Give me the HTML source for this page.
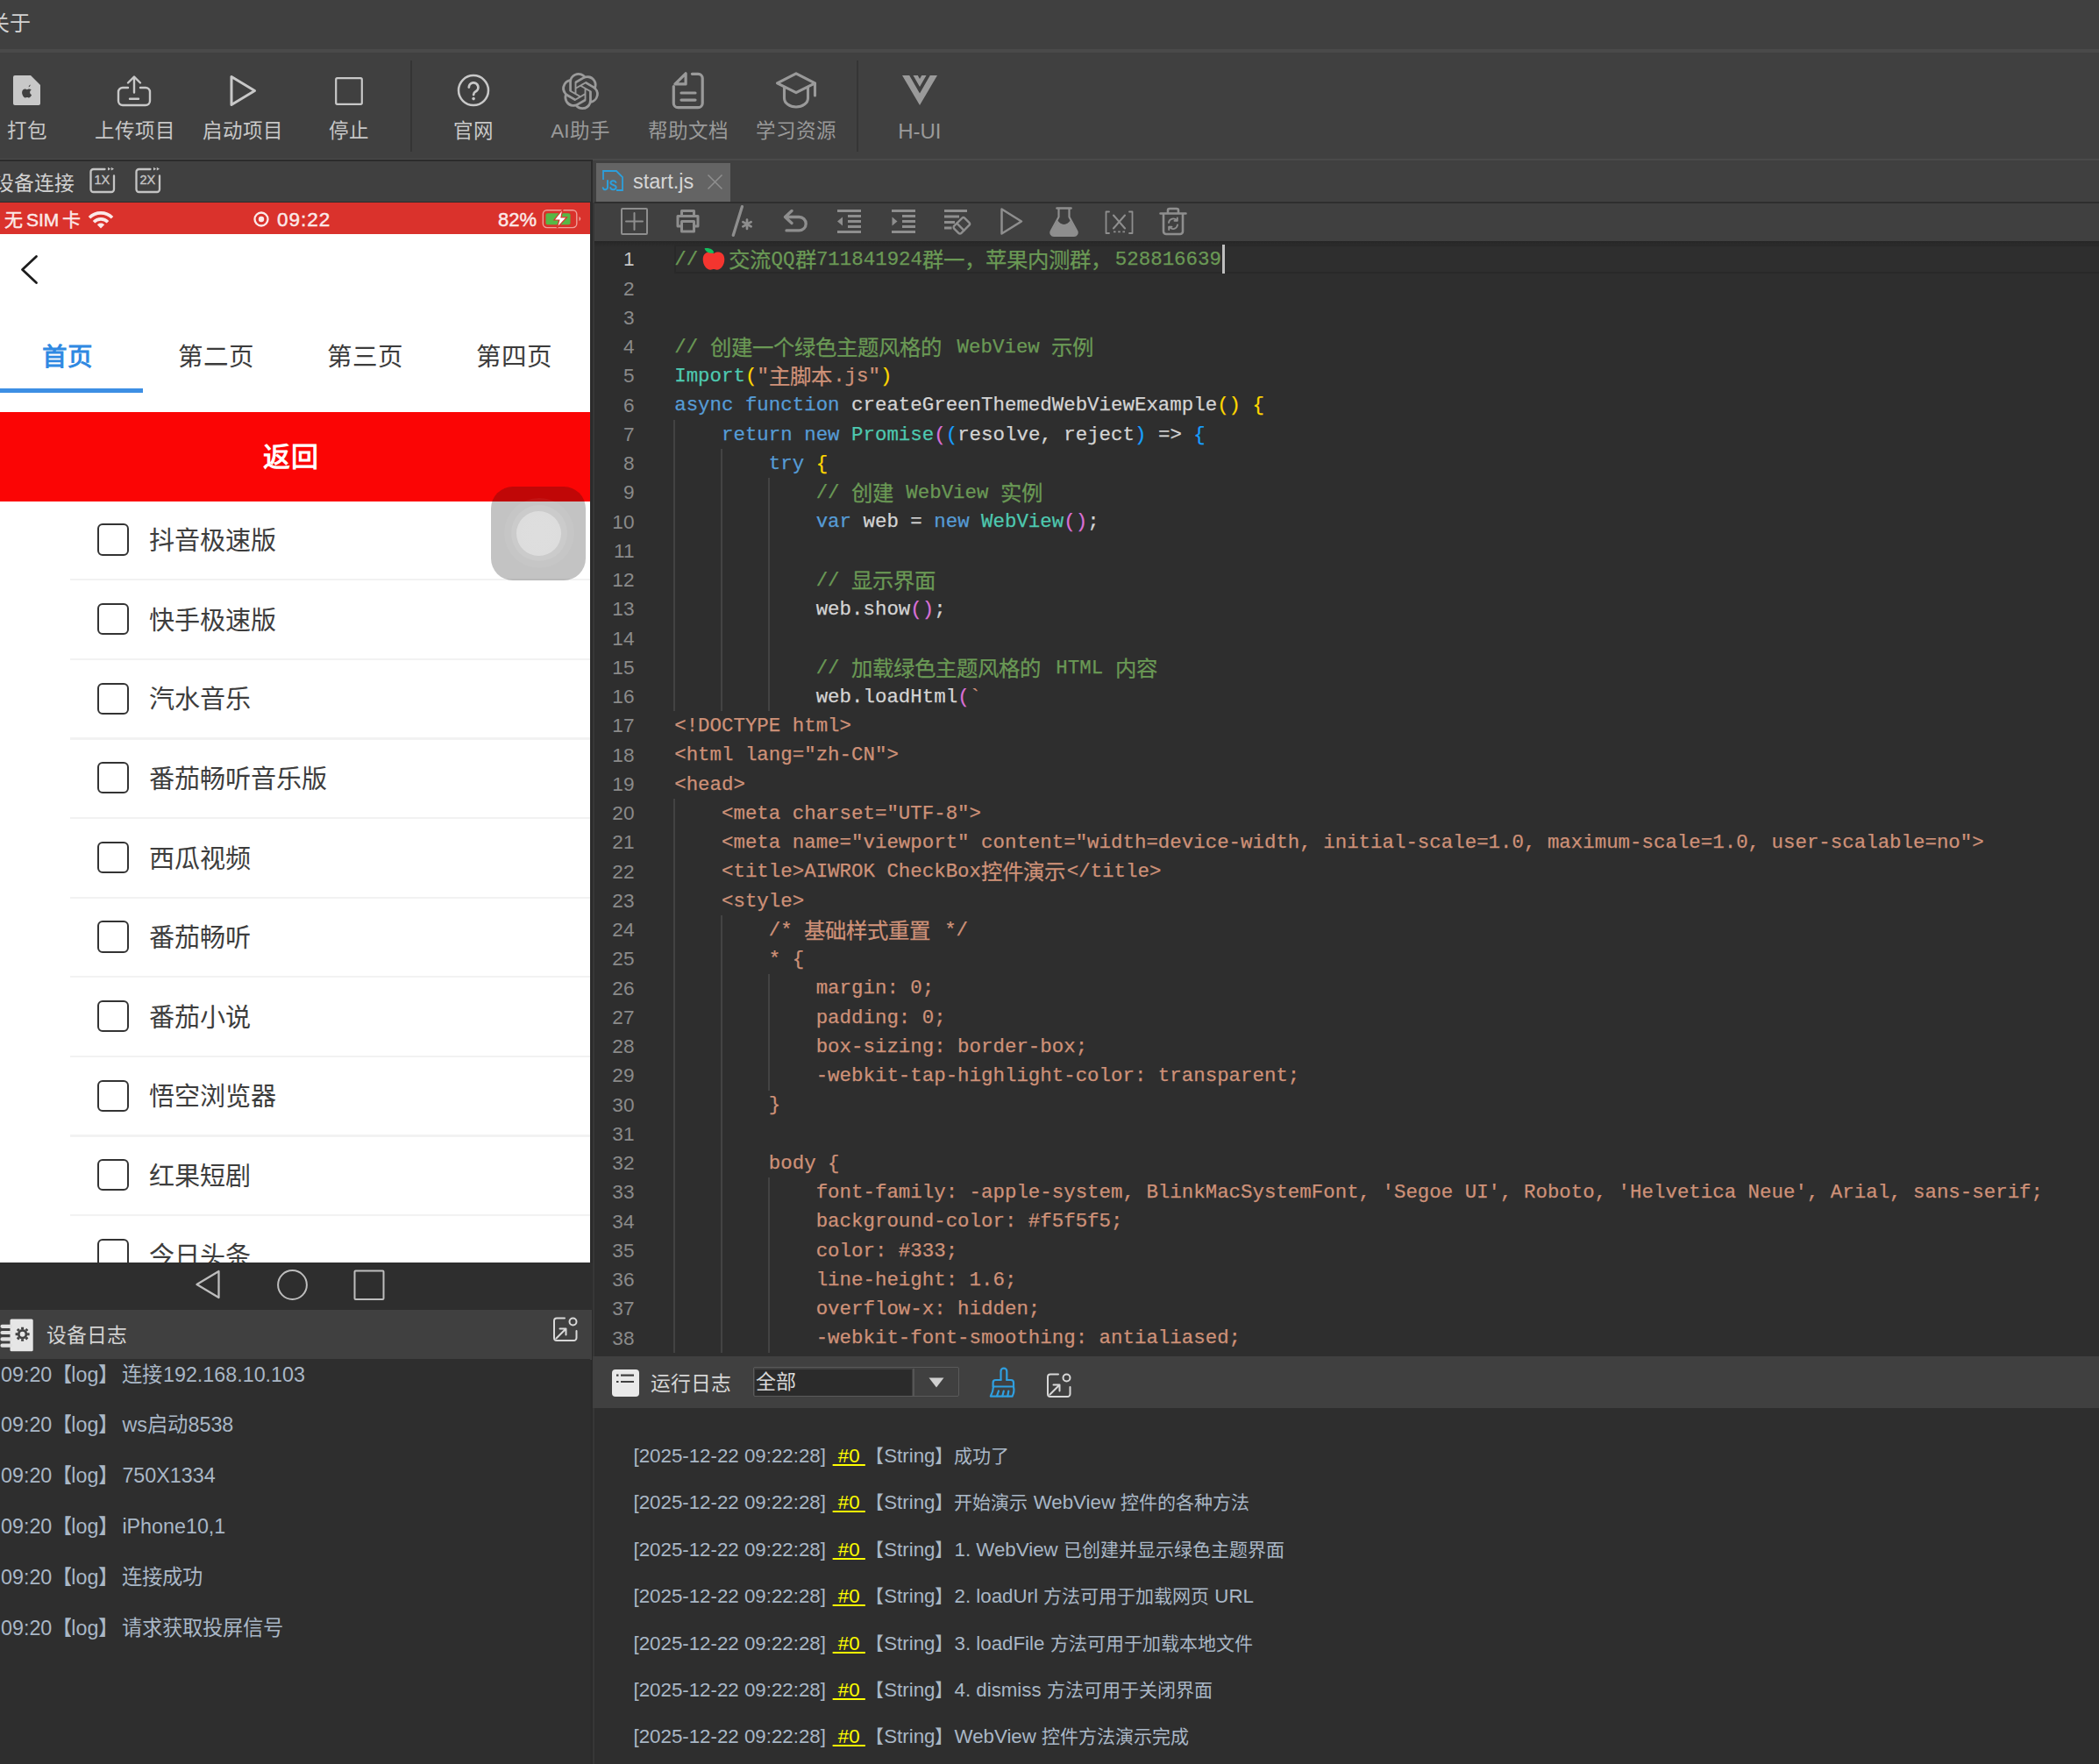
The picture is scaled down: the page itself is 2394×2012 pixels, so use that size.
<!DOCTYPE html>
<html lang="zh-CN"><head><meta charset="utf-8"><title>AIWROK IDE</title><style>
html,body{margin:0;padding:0;}
body{width:2394px;height:2012px;position:relative;overflow:hidden;background:#2e2e2e;font-family:"Liberation Sans", sans-serif;}
body>div,body>svg,.abs{position:absolute;}
.t{white-space:nowrap;font-family:"Liberation Sans", sans-serif;}
.m{white-space:pre;font-family:"Liberation Mono", monospace;-webkit-text-stroke:0.250px currentColor;}
.cj{display:inline-block;overflow:hidden;white-space:nowrap;vertical-align:top;text-align:left;}
svg{overflow:visible;}
</style></head>
<body>
<div style="left:0px;top:0px;width:2394px;height:56px;background:#404040;"></div>
<div class="t" style="left:-13px;top:10.5px;height:31px;line-height:31px;font-size:24px;color:#d2d2d2;">关于</div>
<div style="left:0px;top:56px;width:2394px;height:4px;background:#4a4a4a;"></div>
<div style="left:0px;top:60px;width:2394px;height:121px;background:#404040;"></div>
<div style="left:0px;top:181px;width:2394px;height:1.5px;background:#4a4a4a;"></div>
<div style="left:0px;top:182.5px;width:2394px;height:1.5px;background:#404040;"></div>
<svg style="left:14px;top:85px;" width="33" height="36" viewBox="0 0 33 36"><path d="M3 1 H21 L32 12 V33 a2 2 0 0 1 -2 2 H3 a2 2 0 0 1 -2 -2 V3 a2 2 0 0 1 2 -2 Z" fill="#c8c8c8"/><path d="M18.6 14.2c.1-1.2.9-2.3 2-2.8.1 1.300-.8 2.500-2 2.800zM21.800 17.400c-1.200.7-1.700 1.600-1.700 2.800 0 1.300.8 2.400 2 2.900-.5 1.500-1.700 3.400-3 3.400-.8 0-1.300-.5-2.200-.5s-1.500.5-2.300.5c-1.500 0-3.500-3.100-3.500-5.900 0-2.600 1.700-4 3.400-4 .9 0 1.700.6 2.300.6.600 0 1.500-.7 2.600-.7.900 0 1.800.3 2.400.9z" fill="#404040"/></svg>
<div class="t" style="left:-119.0px;top:135.3px;width:300px;text-align:center;height:29px;line-height:29px;font-size:22.5px;color:#c8c8c8;">打包</div>
<svg style="left:133px;top:85px;" width="40" height="37" viewBox="0 0 40 37"><g fill="none" stroke-linecap="round" stroke-linejoin="round" stroke="#c8c8c8" stroke-width="2.4"><path d="M13 15 H7 a5 5 0 0 0 -5 5 V30 a5 5 0 0 0 5 5 H33 a5 5 0 0 0 5 -5 V20 a5 5 0 0 0 -5 -5 H27"/><path d="M20 20.500 V3 M13 9.500 L20 2.500 L27 9.500 M15 27.800 H25"/></g></svg>
<div class="t" style="left:4.0px;top:135.3px;width:300px;text-align:center;height:29px;line-height:29px;font-size:22.5px;color:#c8c8c8;">上传项目</div>
<svg style="left:261px;top:84px;" width="32" height="39" viewBox="0 0 32 39"><path d="M3 3.500 V35.500 L29.500 19.500 Z" fill="none" stroke-linecap="round" stroke-linejoin="round" stroke="#c8c8c8" stroke-width="3"/></svg>
<div class="t" style="left:126.5px;top:135.3px;width:300px;text-align:center;height:29px;line-height:29px;font-size:22.5px;color:#c8c8c8;">启动项目</div>
<svg style="left:381px;top:87px;" width="34" height="34" viewBox="0 0 34 34"><rect x="2.200" y="2.200" width="29.600" height="29.600" rx="1.500" fill="none" stroke="#c8c8c8" stroke-width="2.200"/></svg>
<div class="t" style="left:248.0px;top:135.3px;width:300px;text-align:center;height:29px;line-height:29px;font-size:22.5px;color:#c8c8c8;">停止</div>
<div style="left:468px;top:69px;width:2px;height:104px;background:#353535;"></div>
<svg style="left:520px;top:84px;" width="40" height="40" viewBox="0 0 40 40"><circle cx="20" cy="19.100" r="17" fill="none" stroke="#c8c8c8" stroke-width="2.500"/><path d="M14.800 15.600 a5.300 5.300 0 1 1 7.600 4.800 c-1.700 1 -2.300 1.800 -2.300 3.600" fill="none" stroke-linecap="round" stroke-linejoin="round" stroke="#c8c8c8" stroke-width="2.800"/><circle cx="20.100" cy="28.600" r="1.800" fill="#c8c8c8"/></svg>
<div class="t" style="left:389.7px;top:135.3px;width:300px;text-align:center;height:29px;line-height:29px;font-size:22.5px;color:#c8c8c8;">官网</div>
<svg style="left:641px;top:82.5px;" width="42" height="42" viewBox="0 0 24 24"><path d="M22.2819 9.8211a5.9847 5.9847 0 0 0-.5157-4.9108 6.0462 6.0462 0 0 0-6.5098-2.9A6.0651 6.0651 0 0 0 4.9807 4.1818a5.9847 5.9847 0 0 0-3.9977 2.9 6.0462 6.0462 0 0 0 .7427 7.0966 5.98 5.98 0 0 0 .511 4.9107 6.051 6.051 0 0 0 6.5146 2.9001A5.9847 5.9847 0 0 0 13.2599 24a6.0557 6.0557 0 0 0 5.7718-4.2058 5.9894 5.9894 0 0 0 3.9977-2.9001 6.0557 6.0557 0 0 0-.7475-7.0729zm-9.022 12.6081a4.4755 4.4755 0 0 1-2.8764-1.0408l.1419-.0804 4.7783-2.7582a.7948.7948 0 0 0 .3927-.6813v-6.7369l2.02 1.1686a.071.071 0 0 1 .038.052v5.5826a4.504 4.504 0 0 1-4.4945 4.4944zm-9.6607-4.1254a4.4708 4.4708 0 0 1-.5346-3.0137l.142.0852 4.783 2.7582a.7712.7712 0 0 0 .7806 0l5.8428-3.3685v2.3324a.0804.0804 0 0 1-.0332.0615L9.74 19.9502a4.4992 4.4992 0 0 1-6.1408-1.6464zM2.3408 7.8956a4.485 4.485 0 0 1 2.3655-1.9728V11.6a.7664.7664 0 0 0 .3879.6765l5.8144 3.3543-2.0201 1.1685a.0757.0757 0 0 1-.071 0l-4.8303-2.7865A4.504 4.504 0 0 1 2.3408 7.872zm16.5963 3.8558L13.1038 8.364 15.1192 7.2a.0757.0757 0 0 1 .071 0l4.8303 2.7913a4.4944 4.4944 0 0 1-.6765 8.1042v-5.6772a.79.79 0 0 0-.407-.667zm2.0107-3.0231l-.142-.0852-4.7735-2.7818a.7759.7759 0 0 0-.7854 0L9.409 9.2297V6.8974a.0662.0662 0 0 1 .0284-.0615l4.8303-2.7866a4.4992 4.4992 0 0 1 6.6802 4.66zM8.3065 12.863l-2.02-1.1638a.0804.0804 0 0 1-.038-.0567V6.0742a4.4992 4.4992 0 0 1 7.3757-3.4537l-.142.0805L8.704 5.459a.7948.7948 0 0 0-.3927.6813zm1.0976-2.3654l2.602-1.4998 2.6069 1.4998v2.9994l-2.5974 1.4997-2.6067-1.4997Z" fill="#9a9a9a"/></svg>
<div class="t" style="left:512.0px;top:135.3px;width:300px;text-align:center;height:29px;line-height:29px;font-size:22.5px;color:#9a9a9a;">AI助手</div>
<svg style="left:765px;top:81px;" width="40" height="45" viewBox="0 0 40 45"><g fill="none" stroke-linecap="round" stroke-linejoin="round" stroke="#9a9a9a" stroke-width="3.200"><path d="M24.400 3.300 H31.200 a5 5 0 0 1 5 5 V36.700 a5 5 0 0 1 -5 5 H8.300 a5 5 0 0 1 -5 -5 V17.500"/><path d="M4.900 14.900 L17.100 2.800 V14.900 Z"/><path d="M12 25 H28 M12 33.100 H28"/></g></svg>
<div class="t" style="left:635.0px;top:135.3px;width:300px;text-align:center;height:29px;line-height:29px;font-size:22.5px;color:#9a9a9a;">帮助文档</div>
<svg style="left:884px;top:82px;" width="48" height="44" viewBox="0 0 48 44"><g fill="none" stroke-linecap="round" stroke-linejoin="round" stroke="#9a9a9a" stroke-width="3.100"><path d="M24 1.900 L45.500 12.800 L24 23.700 L2.500 12.800 Z M10.500 17.500 V30 c0 5.500 6 10 13.500 10 s13.500 -4.500 13.500 -10 V17.500 M45.500 12.800 V27"/></g></svg>
<div class="t" style="left:757.6px;top:135.3px;width:300px;text-align:center;height:29px;line-height:29px;font-size:22.5px;color:#9a9a9a;">学习资源</div>
<div style="left:977px;top:69px;width:2px;height:104px;background:#353535;"></div>
<svg style="left:1028px;top:85px;" width="42" height="36" viewBox="0 0 42 36"><path d="M1 1 H9.200 L21 21.500 L32.800 1 H41 L21 35 Z" fill="#9a9a9a"/><path d="M13.500 1 H18.800 L21 5 L23.200 1 H28.500 L21 14 Z" fill="#9a9a9a"/></svg>
<div class="t" style="left:898.8px;top:134.0px;width:300px;text-align:center;height:31px;line-height:31px;font-size:24px;color:#9a9a9a;">H-UI</div>
<div style="left:0px;top:184px;width:674px;height:46px;background:#404040;"></div>
<div style="left:0px;top:182.4px;width:676px;height:1.8px;background:#2b2b2b;"></div>
<div style="left:673px;top:231px;width:1.2px;height:1781px;background:#2d2d2d;"></div>
<div style="left:674.2px;top:184px;width:1.8px;height:1828px;background:#2b2b2b;"></div>
<div style="left:676px;top:184px;width:2px;height:47px;background:#404040;"></div>
<div style="left:676px;top:231px;width:2px;height:1781px;background:#373737;"></div>
<div style="left:0px;top:229.5px;width:676px;height:1.8px;background:#2b2b2b;"></div>
<div class="t" style="left:-6.6px;top:193.7px;height:30px;line-height:30px;font-size:22.8px;color:#d2d2d2;">设备连接</div>
<svg style="left:101px;top:190px;" width="32" height="32" viewBox="0 0 32 32"><path d="M18.500 3 H5.500 a3 3 0 0 0 -3 3 V26 a3 3 0 0 0 3 3 H26 a3 3 0 0 0 3 -3 V10.500" fill="none" stroke-linecap="round" stroke-linejoin="round" stroke="#c4c4c4" stroke-width="2.300"/><path d="M22 0.800 L25.200 2.700 L22 4.600 Z M25.800 0.800 L29 2.700 L25.800 4.600 Z" fill="#c4c4c4"/><text x="15.300" y="20.300" text-anchor="middle" font-family="Liberation Sans, sans-serif" font-size="14.500" fill="#c4c4c4" stroke="#c4c4c4" stroke-width="0.400">1X</text></svg>
<svg style="left:153px;top:190px;" width="32" height="32" viewBox="0 0 32 32"><path d="M18.500 3 H5.500 a3 3 0 0 0 -3 3 V26 a3 3 0 0 0 3 3 H26 a3 3 0 0 0 3 -3 V10.500" fill="none" stroke-linecap="round" stroke-linejoin="round" stroke="#c4c4c4" stroke-width="2.300"/><path d="M22 0.800 L25.200 2.700 L22 4.600 Z M25.800 0.800 L29 2.700 L25.800 4.600 Z" fill="#c4c4c4"/><text x="15.300" y="20.300" text-anchor="middle" font-family="Liberation Sans, sans-serif" font-size="14.500" fill="#c4c4c4" stroke="#c4c4c4" stroke-width="0.400">2X</text></svg>
<div style="left:678px;top:184px;width:1716px;height:46px;background:#404040;"></div>
<div style="left:679.7px;top:186px;width:153.3px;height:43.7px;background:#646464;"></div>
<svg style="left:686px;top:193px;" width="26" height="26" viewBox="0 0 26 26"><path d="M2 12 V2 H17 L24 9 V24 H17" fill="none" stroke="#2d9fdb" stroke-width="1.800"/><g fill="none" stroke="#2d9fdb" stroke-width="2" stroke-linecap="round"><path d="M7 13 V20.400 a2.700 2.700 0 0 1 -5.300 0.800"/><path d="M16.400 15 a3.100 2.500 0 0 0 -6 0.300 c0 3.500 6.300 1.900 6.300 5.500 a3.300 2.700 0 0 1 -6.500 0.200"/></g></svg>
<div class="t" style="left:722px;top:192.0px;height:31px;line-height:31px;font-size:23.5px;color:#d6d6d6;">start.js</div>
<svg style="left:806px;top:198px;" width="19" height="19" viewBox="0 0 19 19"><path d="M1.500 1.500 L17.500 17.500 M17.500 1.500 L1.500 17.500" stroke="#8e8e8e" stroke-width="1.600" fill="none"/></svg>
<div style="left:678px;top:229.7px;width:1716px;height:1.8px;background:#2f2f2f;"></div>
<div style="left:678px;top:231.5px;width:1716px;height:43.5px;background:#404040;"></div>
<svg style="left:707px;top:236px;" width="33" height="33" viewBox="0 0 33 33"><g fill="none" stroke-linecap="round" stroke-linejoin="round" stroke="#8e8e8e" stroke-width="2"><rect x="2" y="2" width="29" height="29" rx="1"/><path d="M7 16.500 H26 M16.500 7 V26"/></g></svg>
<svg style="left:770px;top:238px;" width="29" height="28" viewBox="0 0 29 28"><g fill="none" stroke-linecap="round" stroke-linejoin="round" stroke="#8e8e8e" stroke-width="3" stroke-linecap="butt" stroke-linejoin="miter"><path d="M7.500 8.500 V2.500 H21.500 V8.500"/><path d="M7.500 20 H3 V8.500 H26 V20 H21.500"/><rect x="7.500" y="14.500" width="14" height="11.500"/></g></svg>
<svg style="left:832px;top:233px;" width="32" height="38" viewBox="0 0 32 38"><path d="M14.400 2.700 L4.300 35.300" stroke="#8e8e8e" stroke-width="3.300" stroke-linecap="round" fill="none"/><g stroke="#8e8e8e" stroke-width="2.700" stroke-linecap="round"><path d="M20 17.500 V28 M15.400 20.100 L24.600 25.400 M24.600 20.100 L15.400 25.400"/></g></svg>
<svg style="left:892px;top:237px;" width="32" height="30" viewBox="0 0 32 30"><g fill="none" stroke-linecap="round" stroke-linejoin="round" stroke="#8e8e8e" stroke-width="3.300"><path d="M11 3.500 L3.500 10.500 L11 17.500"/><path d="M4.500 10.500 H19.500 a7.700 7.700 0 0 1 0 15.400 H5"/></g></svg>
<svg style="left:955px;top:239px;" width="27" height="27" viewBox="0 0 27 27"><g stroke="#8e8e8e" stroke-width="2.900" fill="none"><path d="M0 1.500 H27 M12 7.500 H27 M12 13.500 H27 M12 19.500 H27 M0 25.500 H27"/></g><path d="M0 13.500 L6 8.500 V18.500 Z" fill="#8e8e8e"/></svg>
<svg style="left:1016.5px;top:239px;" width="27" height="27" viewBox="0 0 27 27"><g stroke="#8e8e8e" stroke-width="2.900" fill="none"><path d="M0 1.500 H27 M12 7.500 H27 M12 13.500 H27 M12 19.500 H27 M0 25.500 H27"/></g><path d="M6.500 13.500 L0.500 8.500 V18.500 Z" fill="#8e8e8e"/></svg>
<svg style="left:1076px;top:238px;" width="32" height="31" viewBox="0 0 32 31"><g stroke="#8e8e8e" stroke-width="2.900" fill="none"><path d="M1 2.500 H27 M1 9 H18 M1 15.500 H13 M1 22 H9.500"/></g><g transform="rotate(-45 21 19.500)" fill="none" stroke-linecap="round" stroke-linejoin="round" stroke="#8e8e8e" stroke-width="2.400"><rect x="12.500" y="13.500" width="17" height="11.500" rx="2.200"/><path d="M19 13.500 V25"/></g></svg>
<svg style="left:1140px;top:236px;" width="28" height="33" viewBox="0 0 28 33"><path d="M2.500 2.500 V30.500 L25 16.500 Z" fill="none" stroke-linecap="round" stroke-linejoin="round" stroke="#8e8e8e" stroke-width="2.500"/></svg>
<svg style="left:1197px;top:236px;" width="33" height="34" viewBox="0 0 33 34"><path d="M8.500 1.500 H24.500" stroke="#8e8e8e" stroke-width="2.600" stroke-linecap="round"/><path d="M10.500 2 V11.500 L1.800 27.500 a3.600 3.600 0 0 0 3.200 5.300 H28 a3.600 3.600 0 0 0 3.200 -5.300 L22.500 11.500 V2" fill="none" stroke-linecap="round" stroke-linejoin="round" stroke="#8e8e8e" stroke-width="2.200"/><path d="M9.200 15.500 c2.500 3 5 4.500 7.300 4.500 s4.800 -1.500 7.300 -4.500 L31 28 a3 3 0 0 1 -2.800 4.500 H4.800 a3 3 0 0 1 -2.800 -4.500 Z" fill="#8e8e8e"/></svg>
<svg style="left:1260px;top:240px;" width="33" height="28" viewBox="0 0 33 28"><g fill="none" stroke-linecap="round" stroke-linejoin="round" stroke="#8e8e8e" stroke-width="1.800"><path d="M5 1.500 H1.500 V26 H5 M28 1.500 H31.500 V26 H28"/><path d="M10 5.500 L23 20.500 M23 5.500 L10 20.500" stroke-width="2.100"/></g><path d="M10 24.300 h2.600 M15.200 24.300 h2.600 M20.400 24.300 h2.600" stroke="#8e8e8e" stroke-width="1.800" fill="none"/></svg>
<svg style="left:1322px;top:236px;" width="32" height="33" viewBox="0 0 32 33"><g fill="none" stroke-linecap="round" stroke-linejoin="round" stroke="#8e8e8e" stroke-width="2.600"><path d="M1.500 7.500 H30.500 M10 7 V4 a2 2 0 0 1 2 -2 H20 a2 2 0 0 1 2 2 V7 M5 8 V28 a3 3 0 0 0 3 3 H24 a3 3 0 0 0 3 -3 V8"/></g><g fill="none" stroke-linecap="round" stroke-linejoin="round" stroke="#8e8e8e" stroke-width="1.900"><path d="M11 18 a5.200 5.200 0 0 1 9.300 -2.500 M21 20.500 a5.200 5.200 0 0 1 -9.300 2.500"/><path d="M20.800 12.500 V15.800 H17.500 M11.200 26 V22.700 H14.500"/></g></svg>
<div style="left:0px;top:231px;width:673px;height:1209px;background:#ffffff;"></div>
<div style="left:0px;top:231px;width:673px;height:36.3px;background:#da322c;"></div>
<div class="t" style="left:5px;top:236.5px;height:27px;line-height:27px;font-size:21px;color:#fbe9e8;font-weight:normal;-webkit-text-stroke:0.450px #fbe9e8;">无</div>
<div class="t" style="left:30px;top:236.5px;height:27px;line-height:27px;font-size:21px;color:#fbe9e8;font-weight:normal;-webkit-text-stroke:0.450px #fbe9e8;">SIM</div>
<div class="t" style="left:71px;top:236.5px;height:27px;line-height:27px;font-size:21px;color:#fbe9e8;font-weight:normal;-webkit-text-stroke:0.450px #fbe9e8;">卡</div>
<svg style="left:100px;top:239px;" width="30" height="23" viewBox="0 0 30 23"><g fill="none" stroke="#fbe9e8" stroke-width="3.600" stroke-linecap="butt"><path d="M2 9.200 A18.500 18.500 0 0 1 28 9.200"/><path d="M7 14.200 A11.400 11.400 0 0 1 23 14.200"/></g><path d="M15 21.500 L10.800 17.300 A6 6 0 0 1 19.200 17.300 Z" fill="#fbe9e8"/></svg>
<svg style="left:288px;top:240px;" width="20" height="20" viewBox="0 0 20 20"><circle cx="10" cy="10" r="7.500" fill="none" stroke="#fbe9e8" stroke-width="2.300"/><circle cx="10" cy="10" r="3.200" fill="#fbe9e8"/></svg>
<div class="t" style="left:316px;top:235.5px;height:29px;line-height:29px;font-size:22.5px;color:#fbe9e8;font-weight:normal;-webkit-text-stroke:0.450px #fbe9e8;letter-spacing:1px;">09:22</div>
<div class="t" style="left:568px;top:235.5px;height:29px;line-height:29px;font-size:22px;color:#fbe9e8;font-weight:normal;-webkit-text-stroke:0.450px #fbe9e8;">82%</div>
<svg style="left:618px;top:239px;" width="48" height="23" viewBox="0 0 48 23"><rect x="1.300" y="0.800" width="38.500" height="19.800" rx="4.500" fill="none" stroke="#ee9f99" stroke-width="1.400"/><rect x="4.500" y="4.300" width="28" height="13" rx="2" fill="#57b846"/><path d="M42.500 8 a2.800 2.800 0 0 1 0 5.200 Z" fill="#ee9f99"/><path d="M24 -0.500 L14 12 H19.800 L17.200 21 L28.500 8.800 H22 Z" fill="#ffffff" stroke="#da322c" stroke-width="1.200"/></svg>
<svg style="left:20px;top:288px;" width="28" height="40" viewBox="0 0 28 40"><path d="M21.500 4.500 L5.500 19.500 L21.500 34.500" fill="none" stroke="#1d1d1d" stroke-width="2.800" stroke-linecap="round" stroke-linejoin="round"/></svg>
<div class="t" style="left:-73.3px;top:388.5px;width:300px;text-align:center;height:37px;line-height:37px;font-size:28.5px;color:#3089e2;font-weight:bold;">首页</div>
<div class="t" style="left:96.5px;top:388.5px;width:300px;text-align:center;height:37px;line-height:37px;font-size:28.5px;color:#3c3c3c;">第二页</div>
<div class="t" style="left:266.5px;top:388.5px;width:300px;text-align:center;height:37px;line-height:37px;font-size:28.5px;color:#3c3c3c;">第三页</div>
<div class="t" style="left:436.5px;top:388.5px;width:300px;text-align:center;height:37px;line-height:37px;font-size:28.5px;color:#3c3c3c;">第四页</div>
<div style="left:0px;top:442.5px;width:162.5px;height:5px;background:#3d8fe4;"></div>
<div style="left:0px;top:470px;width:673px;height:102px;background:#fb0505;"></div>
<div class="t" style="left:181.7px;top:501.5px;width:300px;text-align:center;height:40px;line-height:40px;font-size:31px;color:#ffffff;font-weight:bold;letter-spacing:1px;">返回</div>
<div style="left:0;top:572px;width:673px;height:868px;overflow:hidden;">
<div class="abs" style="left:111.200px;top:25.4px;width:32.200px;height:32.200px;border:2.600px solid #333;border-radius:6px;background:#fff;"></div>
<div class="abs t" style="left:170px;top:26.2px;height:38px;line-height:38px;font-size:29.100px;color:#3d3d3d;">抖音极速版</div>
<div class="abs" style="left:80px;top:88.2px;width:593px;height:2.200px;background:#f2f2f2;"></div>
<div class="abs" style="left:111.200px;top:116.0px;width:32.200px;height:32.200px;border:2.600px solid #333;border-radius:6px;background:#fff;"></div>
<div class="abs t" style="left:170px;top:116.8px;height:38px;line-height:38px;font-size:29.100px;color:#3d3d3d;">快手极速版</div>
<div class="abs" style="left:80px;top:178.8px;width:593px;height:2.200px;background:#f2f2f2;"></div>
<div class="abs" style="left:111.200px;top:206.6px;width:32.200px;height:32.200px;border:2.600px solid #333;border-radius:6px;background:#fff;"></div>
<div class="abs t" style="left:170px;top:207.4px;height:38px;line-height:38px;font-size:29.100px;color:#3d3d3d;">汽水音乐</div>
<div class="abs" style="left:80px;top:269.4px;width:593px;height:2.200px;background:#f2f2f2;"></div>
<div class="abs" style="left:111.200px;top:297.2px;width:32.200px;height:32.200px;border:2.600px solid #333;border-radius:6px;background:#fff;"></div>
<div class="abs t" style="left:170px;top:298.0px;height:38px;line-height:38px;font-size:29.100px;color:#3d3d3d;">番茄畅听音乐版</div>
<div class="abs" style="left:80px;top:360.0px;width:593px;height:2.200px;background:#f2f2f2;"></div>
<div class="abs" style="left:111.200px;top:387.8px;width:32.200px;height:32.200px;border:2.600px solid #333;border-radius:6px;background:#fff;"></div>
<div class="abs t" style="left:170px;top:388.6px;height:38px;line-height:38px;font-size:29.100px;color:#3d3d3d;">西瓜视频</div>
<div class="abs" style="left:80px;top:450.6px;width:593px;height:2.200px;background:#f2f2f2;"></div>
<div class="abs" style="left:111.200px;top:478.4px;width:32.200px;height:32.200px;border:2.600px solid #333;border-radius:6px;background:#fff;"></div>
<div class="abs t" style="left:170px;top:479.2px;height:38px;line-height:38px;font-size:29.100px;color:#3d3d3d;">番茄畅听</div>
<div class="abs" style="left:80px;top:541.2px;width:593px;height:2.200px;background:#f2f2f2;"></div>
<div class="abs" style="left:111.200px;top:569.0px;width:32.200px;height:32.200px;border:2.600px solid #333;border-radius:6px;background:#fff;"></div>
<div class="abs t" style="left:170px;top:569.8px;height:38px;line-height:38px;font-size:29.100px;color:#3d3d3d;">番茄小说</div>
<div class="abs" style="left:80px;top:631.8px;width:593px;height:2.200px;background:#f2f2f2;"></div>
<div class="abs" style="left:111.200px;top:659.6px;width:32.200px;height:32.200px;border:2.600px solid #333;border-radius:6px;background:#fff;"></div>
<div class="abs t" style="left:170px;top:660.4px;height:38px;line-height:38px;font-size:29.100px;color:#3d3d3d;">悟空浏览器</div>
<div class="abs" style="left:80px;top:722.4px;width:593px;height:2.200px;background:#f2f2f2;"></div>
<div class="abs" style="left:111.200px;top:750.2px;width:32.200px;height:32.200px;border:2.600px solid #333;border-radius:6px;background:#fff;"></div>
<div class="abs t" style="left:170px;top:751.0px;height:38px;line-height:38px;font-size:29.100px;color:#3d3d3d;">红果短剧</div>
<div class="abs" style="left:80px;top:813.0px;width:593px;height:2.200px;background:#f2f2f2;"></div>
<div class="abs" style="left:111.200px;top:840.8px;width:32.200px;height:32.200px;border:2.600px solid #333;border-radius:6px;background:#fff;"></div>
<div class="abs t" style="left:170px;top:841.6px;height:38px;line-height:38px;font-size:29.100px;color:#3d3d3d;">今日头条</div>
<div class="abs" style="left:80px;top:903.6px;width:593px;height:2.200px;background:#f2f2f2;"></div>
</div>
<div style="left:559.800px;top:554.700px;width:108.400px;height:107.500px;border-radius:25px;background:rgba(15,15,15,0.250);"></div>
<div style="left:574.5px;top:568.3px;width:80px;height:80px;border-radius:50%;background:rgba(255,255,255,0.050);"></div>
<div style="left:582.5px;top:576.3px;width:64px;height:64px;border-radius:50%;background:rgba(255,255,255,0.090);"></div>
<div style="left:589.0px;top:582.8px;width:51.0px;height:51.0px;border-radius:50%;background:radial-gradient(circle,rgba(255,255,255,0.370) 0,rgba(255,255,255,0.350) 86%,rgba(255,255,255,0) 100%);"></div>
<div style="left:0px;top:1440.5px;width:676px;height:53.5px;background:#2e2e2e;"></div>
<svg style="left:221px;top:1447px;" width="32" height="36" viewBox="0 0 32 36"><path d="M28.500 3 V33 L3.500 18 Z" fill="none" stroke="#bdbdbd" stroke-width="2.300" stroke-linejoin="round"/></svg>
<svg style="left:315px;top:1447px;" width="37" height="37" viewBox="0 0 37 37"><circle cx="18.500" cy="18.500" r="16.400" fill="none" stroke="#bdbdbd" stroke-width="2"/></svg>
<svg style="left:403px;top:1448px;" width="36" height="36" viewBox="0 0 36 36"><rect x="1.500" y="1.500" width="33" height="32.500" rx="1" fill="none" stroke="#bdbdbd" stroke-width="2"/></svg>
<div style="left:678px;top:275px;width:1716px;height:1272px;background:#2e2e2e;"></div>
<div style="left:678px;top:275px;width:1716px;height:7px;background:linear-gradient(#262626,#2b2b2b 60%,#2e2e2e);"></div>
<div style="left:769.3px;top:279.3px;width:1624.7px;height:2px;background:#292929;"></div>
<div style="left:769.3px;top:309.7px;width:1624.7px;height:2px;background:#292929;"></div>
<div style="left:769.3px;top:279.3px;width:2px;height:32.4px;background:#292929;"></div>
<div style="left:1394px;top:279px;width:3px;height:32.7px;background:#bebebe;"></div>
<div style="left:768px;top:478.9px;width:1.5px;height:332.5px;background:#434343;"></div>
<div style="left:822px;top:512.1px;width:1.5px;height:299.2px;background:#434343;"></div>
<div style="left:876px;top:545.4px;width:1.5px;height:266.0px;background:#434343;"></div>
<div style="left:768px;top:911.1px;width:1.5px;height:631.8px;background:#434343;"></div>
<div style="left:822px;top:1044.2px;width:1.5px;height:498.8px;background:#434343;"></div>
<div style="left:876px;top:1110.7px;width:1.5px;height:133.0px;background:#434343;"></div>
<div style="left:876px;top:1343.4px;width:1.5px;height:199.5px;background:#434343;"></div>
<div style="left:680px;top:277px;width:1714px;height:1270px;overflow:hidden;">
<div class="abs t" style="left:0;top:2.40px;width:43.500px;height:33.25px;line-height:33.25px;text-align:right;font-size:22.600px;color:#c8c8c8;">1</div>
<div class="abs m" style="left:89.2px;top:3.10px;height:33.25px;line-height:33.25px;font-size:22.43px;"><span style="color:#6a9955">//</span><span class="cj" style="width:34.700px;height:33px;position:relative;"><svg class="abs" style="left:4.500px;top:1.800px" width="26" height="28" viewBox="0 0 26 28"><path d="M13 7.200 C9.500 4.200 0.700 4.800 0.700 13.800 C0.700 20.500 5 25.700 9.300 25.700 C11 25.700 12 25 13 25 S15 25.700 16.700 25.700 C21 25.700 25.300 20.500 25.300 13.800 C25.300 4.800 16.500 4.200 13 7.200 Z" fill="#f4352f"/><path d="M13.200 6.500 C13 2.500 8 0.300 2.600 1.200 C3.500 5.500 8.500 7.500 13.200 6.500 Z" fill="#14c05e"/></svg></span><span style="color:#6a9955"><span class="cj" style="width:48.8px;font-family:&quot;Liberation Serif&quot;,serif;font-size:24.42px;">交流</span>QQ<span class="cj" style="width:24.4px;font-family:&quot;Liberation Serif&quot;,serif;font-size:24.42px;">群</span>711841924<span class="cj" style="width:219.8px;font-family:&quot;Liberation Serif&quot;,serif;font-size:24.42px;">群一，苹果内测群，</span>528816639</span></div>
<div class="abs t" style="left:0;top:35.65px;width:43.500px;height:33.25px;line-height:33.25px;text-align:right;font-size:22.600px;color:#8a8a8a;">2</div>
<div class="abs t" style="left:0;top:68.90px;width:43.500px;height:33.25px;line-height:33.25px;text-align:right;font-size:22.600px;color:#8a8a8a;">3</div>
<div class="abs t" style="left:0;top:102.15px;width:43.500px;height:33.25px;line-height:33.25px;text-align:right;font-size:22.600px;color:#8a8a8a;">4</div>
<div class="abs m" style="left:89.2px;top:102.85px;height:33.25px;line-height:33.25px;font-size:22.43px;"><span style="color:#6a9955">// <span class="cj" style="width:268.6px;font-family:&quot;Liberation Serif&quot;,serif;font-size:24.42px;">创建一个绿色主题风格的</span> WebView <span class="cj" style="width:48.8px;font-family:&quot;Liberation Serif&quot;,serif;font-size:24.42px;">示例</span></span></div>
<div class="abs t" style="left:0;top:135.40px;width:43.500px;height:33.25px;line-height:33.25px;text-align:right;font-size:22.600px;color:#8a8a8a;">5</div>
<div class="abs m" style="left:89.2px;top:136.10px;height:33.25px;line-height:33.25px;font-size:22.43px;"><span style="color:#4ec9b0">Import</span><span style="color:#ffd700">(</span><span style="color:#ce9178">"<span class="cj" style="width:73.3px;font-family:&quot;Liberation Serif&quot;,serif;font-size:24.42px;">主脚本</span>.js"</span><span style="color:#ffd700">)</span></div>
<div class="abs t" style="left:0;top:168.65px;width:43.500px;height:33.25px;line-height:33.25px;text-align:right;font-size:22.600px;color:#8a8a8a;">6</div>
<div class="abs m" style="left:89.2px;top:169.35px;height:33.25px;line-height:33.25px;font-size:22.43px;"><span style="color:#569cd6">async function</span><span style="color:#d4d4d4"> createGreenThemedWebViewExample</span><span style="color:#ffd700">() {</span></div>
<div class="abs t" style="left:0;top:201.90px;width:43.500px;height:33.25px;line-height:33.25px;text-align:right;font-size:22.600px;color:#8a8a8a;">7</div>
<div class="abs m" style="left:89.2px;top:202.60px;height:33.25px;line-height:33.25px;font-size:22.43px;"><span style="color:#569cd6">    return new</span><span style="color:#4ec9b0"> Promise</span><span style="color:#da70d6">(</span><span style="color:#179fff">(</span><span style="color:#d4d4d4">resolve, reject</span><span style="color:#179fff">)</span><span style="color:#d4d4d4"> =&gt; </span><span style="color:#179fff">{</span></div>
<div class="abs t" style="left:0;top:235.15px;width:43.500px;height:33.25px;line-height:33.25px;text-align:right;font-size:22.600px;color:#8a8a8a;">8</div>
<div class="abs m" style="left:89.2px;top:235.85px;height:33.25px;line-height:33.25px;font-size:22.43px;"><span style="color:#569cd6">        try</span><span style="color:#ffd700"> {</span></div>
<div class="abs t" style="left:0;top:268.40px;width:43.500px;height:33.25px;line-height:33.25px;text-align:right;font-size:22.600px;color:#8a8a8a;">9</div>
<div class="abs m" style="left:89.2px;top:269.10px;height:33.25px;line-height:33.25px;font-size:22.43px;"><span style="color:#6a9955">            // <span class="cj" style="width:48.8px;font-family:&quot;Liberation Serif&quot;,serif;font-size:24.42px;">创建</span> WebView <span class="cj" style="width:48.8px;font-family:&quot;Liberation Serif&quot;,serif;font-size:24.42px;">实例</span></span></div>
<div class="abs t" style="left:0;top:301.65px;width:43.500px;height:33.25px;line-height:33.25px;text-align:right;font-size:22.600px;color:#8a8a8a;">10</div>
<div class="abs m" style="left:89.2px;top:302.35px;height:33.25px;line-height:33.25px;font-size:22.43px;"><span style="color:#569cd6">            var</span><span style="color:#d4d4d4"> web = </span><span style="color:#569cd6">new</span><span style="color:#4ec9b0"> WebView</span><span style="color:#da70d6">()</span><span style="color:#d4d4d4">;</span></div>
<div class="abs t" style="left:0;top:334.90px;width:43.500px;height:33.25px;line-height:33.25px;text-align:right;font-size:22.600px;color:#8a8a8a;">11</div>
<div class="abs t" style="left:0;top:368.15px;width:43.500px;height:33.25px;line-height:33.25px;text-align:right;font-size:22.600px;color:#8a8a8a;">12</div>
<div class="abs m" style="left:89.2px;top:368.85px;height:33.25px;line-height:33.25px;font-size:22.43px;"><span style="color:#6a9955">            // <span class="cj" style="width:97.7px;font-family:&quot;Liberation Serif&quot;,serif;font-size:24.42px;">显示界面</span></span></div>
<div class="abs t" style="left:0;top:401.40px;width:43.500px;height:33.25px;line-height:33.25px;text-align:right;font-size:22.600px;color:#8a8a8a;">13</div>
<div class="abs m" style="left:89.2px;top:402.10px;height:33.25px;line-height:33.25px;font-size:22.43px;"><span style="color:#d4d4d4">            web.show</span><span style="color:#da70d6">()</span><span style="color:#d4d4d4">;</span></div>
<div class="abs t" style="left:0;top:434.65px;width:43.500px;height:33.25px;line-height:33.25px;text-align:right;font-size:22.600px;color:#8a8a8a;">14</div>
<div class="abs t" style="left:0;top:467.90px;width:43.500px;height:33.25px;line-height:33.25px;text-align:right;font-size:22.600px;color:#8a8a8a;">15</div>
<div class="abs m" style="left:89.2px;top:468.60px;height:33.25px;line-height:33.25px;font-size:22.43px;"><span style="color:#6a9955">            // <span class="cj" style="width:219.8px;font-family:&quot;Liberation Serif&quot;,serif;font-size:24.42px;">加载绿色主题风格的</span> HTML <span class="cj" style="width:48.8px;font-family:&quot;Liberation Serif&quot;,serif;font-size:24.42px;">内容</span></span></div>
<div class="abs t" style="left:0;top:501.15px;width:43.500px;height:33.25px;line-height:33.25px;text-align:right;font-size:22.600px;color:#8a8a8a;">16</div>
<div class="abs m" style="left:89.2px;top:501.85px;height:33.25px;line-height:33.25px;font-size:22.43px;"><span style="color:#d4d4d4">            web.loadHtml</span><span style="color:#da70d6">(</span><span style="color:#ce9178">`</span></div>
<div class="abs t" style="left:0;top:534.40px;width:43.500px;height:33.25px;line-height:33.25px;text-align:right;font-size:22.600px;color:#8a8a8a;">17</div>
<div class="abs m" style="left:89.2px;top:535.10px;height:33.25px;line-height:33.25px;font-size:22.43px;"><span style="color:#ce9178">&lt;!DOCTYPE html&gt;</span></div>
<div class="abs t" style="left:0;top:567.65px;width:43.500px;height:33.25px;line-height:33.25px;text-align:right;font-size:22.600px;color:#8a8a8a;">18</div>
<div class="abs m" style="left:89.2px;top:568.35px;height:33.25px;line-height:33.25px;font-size:22.43px;"><span style="color:#ce9178">&lt;html lang="zh-CN"&gt;</span></div>
<div class="abs t" style="left:0;top:600.90px;width:43.500px;height:33.25px;line-height:33.25px;text-align:right;font-size:22.600px;color:#8a8a8a;">19</div>
<div class="abs m" style="left:89.2px;top:601.60px;height:33.25px;line-height:33.25px;font-size:22.43px;"><span style="color:#ce9178">&lt;head&gt;</span></div>
<div class="abs t" style="left:0;top:634.15px;width:43.500px;height:33.25px;line-height:33.25px;text-align:right;font-size:22.600px;color:#8a8a8a;">20</div>
<div class="abs m" style="left:89.2px;top:634.85px;height:33.25px;line-height:33.25px;font-size:22.43px;"><span style="color:#ce9178">    &lt;meta charset="UTF-8"&gt;</span></div>
<div class="abs t" style="left:0;top:667.40px;width:43.500px;height:33.25px;line-height:33.25px;text-align:right;font-size:22.600px;color:#8a8a8a;">21</div>
<div class="abs m" style="left:89.2px;top:668.10px;height:33.25px;line-height:33.25px;font-size:22.43px;"><span style="color:#ce9178">    &lt;meta name="viewport" content="width=device-width, initial-scale=1.0, maximum-scale=1.0, user-scalable=no"&gt;</span></div>
<div class="abs t" style="left:0;top:700.65px;width:43.500px;height:33.25px;line-height:33.25px;text-align:right;font-size:22.600px;color:#8a8a8a;">22</div>
<div class="abs m" style="left:89.2px;top:701.35px;height:33.25px;line-height:33.25px;font-size:22.43px;"><span style="color:#ce9178">    &lt;title&gt;AIWROK CheckBox<span class="cj" style="width:97.7px;font-family:&quot;Liberation Serif&quot;,serif;font-size:24.42px;">控件演示</span>&lt;/title&gt;</span></div>
<div class="abs t" style="left:0;top:733.90px;width:43.500px;height:33.25px;line-height:33.25px;text-align:right;font-size:22.600px;color:#8a8a8a;">23</div>
<div class="abs m" style="left:89.2px;top:734.60px;height:33.25px;line-height:33.25px;font-size:22.43px;"><span style="color:#ce9178">    &lt;style&gt;</span></div>
<div class="abs t" style="left:0;top:767.15px;width:43.500px;height:33.25px;line-height:33.25px;text-align:right;font-size:22.600px;color:#8a8a8a;">24</div>
<div class="abs m" style="left:89.2px;top:767.85px;height:33.25px;line-height:33.25px;font-size:22.43px;"><span style="color:#ce9178">        /* <span class="cj" style="width:146.5px;font-family:&quot;Liberation Serif&quot;,serif;font-size:24.42px;">基础样式重置</span> */</span></div>
<div class="abs t" style="left:0;top:800.40px;width:43.500px;height:33.25px;line-height:33.25px;text-align:right;font-size:22.600px;color:#8a8a8a;">25</div>
<div class="abs m" style="left:89.2px;top:801.10px;height:33.25px;line-height:33.25px;font-size:22.43px;"><span style="color:#ce9178">        * {</span></div>
<div class="abs t" style="left:0;top:833.65px;width:43.500px;height:33.25px;line-height:33.25px;text-align:right;font-size:22.600px;color:#8a8a8a;">26</div>
<div class="abs m" style="left:89.2px;top:834.35px;height:33.25px;line-height:33.25px;font-size:22.43px;"><span style="color:#ce9178">            margin: 0;</span></div>
<div class="abs t" style="left:0;top:866.90px;width:43.500px;height:33.25px;line-height:33.25px;text-align:right;font-size:22.600px;color:#8a8a8a;">27</div>
<div class="abs m" style="left:89.2px;top:867.60px;height:33.25px;line-height:33.25px;font-size:22.43px;"><span style="color:#ce9178">            padding: 0;</span></div>
<div class="abs t" style="left:0;top:900.15px;width:43.500px;height:33.25px;line-height:33.25px;text-align:right;font-size:22.600px;color:#8a8a8a;">28</div>
<div class="abs m" style="left:89.2px;top:900.85px;height:33.25px;line-height:33.25px;font-size:22.43px;"><span style="color:#ce9178">            box-sizing: border-box;</span></div>
<div class="abs t" style="left:0;top:933.40px;width:43.500px;height:33.25px;line-height:33.25px;text-align:right;font-size:22.600px;color:#8a8a8a;">29</div>
<div class="abs m" style="left:89.2px;top:934.10px;height:33.25px;line-height:33.25px;font-size:22.43px;"><span style="color:#ce9178">            -webkit-tap-highlight-color: transparent;</span></div>
<div class="abs t" style="left:0;top:966.65px;width:43.500px;height:33.25px;line-height:33.25px;text-align:right;font-size:22.600px;color:#8a8a8a;">30</div>
<div class="abs m" style="left:89.2px;top:967.35px;height:33.25px;line-height:33.25px;font-size:22.43px;"><span style="color:#ce9178">        }</span></div>
<div class="abs t" style="left:0;top:999.90px;width:43.500px;height:33.25px;line-height:33.25px;text-align:right;font-size:22.600px;color:#8a8a8a;">31</div>
<div class="abs t" style="left:0;top:1033.15px;width:43.500px;height:33.25px;line-height:33.25px;text-align:right;font-size:22.600px;color:#8a8a8a;">32</div>
<div class="abs m" style="left:89.2px;top:1033.85px;height:33.25px;line-height:33.25px;font-size:22.43px;"><span style="color:#ce9178">        body {</span></div>
<div class="abs t" style="left:0;top:1066.40px;width:43.500px;height:33.25px;line-height:33.25px;text-align:right;font-size:22.600px;color:#8a8a8a;">33</div>
<div class="abs m" style="left:89.2px;top:1067.10px;height:33.25px;line-height:33.25px;font-size:22.43px;"><span style="color:#ce9178">            font-family: -apple-system, BlinkMacSystemFont, 'Segoe UI', Roboto, 'Helvetica Neue', Arial, sans-serif;</span></div>
<div class="abs t" style="left:0;top:1099.65px;width:43.500px;height:33.25px;line-height:33.25px;text-align:right;font-size:22.600px;color:#8a8a8a;">34</div>
<div class="abs m" style="left:89.2px;top:1100.35px;height:33.25px;line-height:33.25px;font-size:22.43px;"><span style="color:#ce9178">            background-color: #f5f5f5;</span></div>
<div class="abs t" style="left:0;top:1132.90px;width:43.500px;height:33.25px;line-height:33.25px;text-align:right;font-size:22.600px;color:#8a8a8a;">35</div>
<div class="abs m" style="left:89.2px;top:1133.60px;height:33.25px;line-height:33.25px;font-size:22.43px;"><span style="color:#ce9178">            color: #333;</span></div>
<div class="abs t" style="left:0;top:1166.15px;width:43.500px;height:33.25px;line-height:33.25px;text-align:right;font-size:22.600px;color:#8a8a8a;">36</div>
<div class="abs m" style="left:89.2px;top:1166.85px;height:33.25px;line-height:33.25px;font-size:22.43px;"><span style="color:#ce9178">            line-height: 1.6;</span></div>
<div class="abs t" style="left:0;top:1199.40px;width:43.500px;height:33.25px;line-height:33.25px;text-align:right;font-size:22.600px;color:#8a8a8a;">37</div>
<div class="abs m" style="left:89.2px;top:1200.10px;height:33.25px;line-height:33.25px;font-size:22.43px;"><span style="color:#ce9178">            overflow-x: hidden;</span></div>
<div class="abs t" style="left:0;top:1232.65px;width:43.500px;height:33.25px;line-height:33.25px;text-align:right;font-size:22.600px;color:#8a8a8a;">38</div>
<div class="abs m" style="left:89.2px;top:1233.35px;height:33.25px;line-height:33.25px;font-size:22.43px;"><span style="color:#ce9178">            -webkit-font-smoothing: antialiased;</span></div>
</div>
<div style="left:0px;top:1494px;width:675px;height:57px;background:#404040;"></div>
<div style="left:0px;top:1550px;width:673px;height:462px;background:#2e2e2e;"></div>
<svg style="left:-2px;top:1503px;" width="41" height="39" viewBox="0 0 41 39"><rect x="13.500" y="1.400" width="26.200" height="36.800" rx="1.500" fill="#e6e6e6"/><g stroke="#e0e0e0" stroke-width="4.200" stroke-linecap="round"><path d="M4.500 9.800 H14 M4.500 17 H14 M4.500 24.400 H14 M4.500 31.700 H14"/></g><circle cx="27.600" cy="18.700" r="4.300" fill="none" stroke="#424242" stroke-width="2.700"/><g stroke="#424242" stroke-width="3"><path d="M27.600 10.700 V13.200 M27.600 24.200 V26.700 M19.600 18.700 H22.100 M33.100 18.700 H35.600 M21.900 13 L23.700 14.800 M31.500 22.600 L33.300 24.400 M33.300 13 L31.500 14.800 M23.700 22.600 L21.900 24.400"/></g></svg>
<div class="t" style="left:53px;top:1507.5px;height:30px;line-height:30px;font-size:22.8px;color:#d2d2d2;">设备日志</div>
<svg style="left:630px;top:1501px;" width="30" height="30" viewBox="0 0 30 30"><g fill="none" stroke="#d8d8d8" stroke-width="2" stroke-linecap="round" stroke-linejoin="round"><path d="M14 2.500 H5 a3 3 0 0 0 -3 3 V25 a3 3 0 0 0 3 3 H24.500 a3 3 0 0 0 3 -3 V17"/><circle cx="23.500" cy="6.500" r="4"/><path d="M4.500 25.500 L14.500 15.500 M8.500 14.500 H15.500 V21.500"/></g></svg>
<div class="t" style="left:1px;top:1552.5px;height:30px;line-height:30px;font-size:23.3px;color:#a9b7c6;">09:20<span class="cj" style="width:22px;text-align:right;">【</span>log<span class="cj" style="width:27px;">】</span><span class="cj" style="width:46.6px;">连接</span>192.168.10.103</div>
<div class="t" style="left:1px;top:1610.3px;height:30px;line-height:30px;font-size:23.3px;color:#a9b7c6;">09:20<span class="cj" style="width:22px;text-align:right;">【</span>log<span class="cj" style="width:27px;">】</span>ws<span class="cj" style="width:46.6px;">启动</span>8538</div>
<div class="t" style="left:1px;top:1668.1px;height:30px;line-height:30px;font-size:23.3px;color:#a9b7c6;">09:20<span class="cj" style="width:22px;text-align:right;">【</span>log<span class="cj" style="width:27px;">】</span>750X1334</div>
<div class="t" style="left:1px;top:1725.9px;height:30px;line-height:30px;font-size:23.3px;color:#a9b7c6;">09:20<span class="cj" style="width:22px;text-align:right;">【</span>log<span class="cj" style="width:27px;">】</span>iPhone10,1</div>
<div class="t" style="left:1px;top:1783.7px;height:30px;line-height:30px;font-size:23.3px;color:#a9b7c6;">09:20<span class="cj" style="width:22px;text-align:right;">【</span>log<span class="cj" style="width:27px;">】</span><span class="cj" style="width:93.2px;">连接成功</span></div>
<div class="t" style="left:1px;top:1841.5px;height:30px;line-height:30px;font-size:23.3px;color:#a9b7c6;">09:20<span class="cj" style="width:22px;text-align:right;">【</span>log<span class="cj" style="width:27px;">】</span><span class="cj" style="width:186.4px;">请求获取投屏信号</span></div>
<div style="left:676px;top:1547px;width:1718px;height:59px;background:#404040;"></div>
<div style="left:678px;top:1606px;width:1716px;height:406px;background:#2e2e2e;"></div>
<svg style="left:697px;top:1561px;" width="33" height="33" viewBox="0 0 33 33"><rect x="1" y="1" width="31" height="31" rx="4" fill="#e9e9e9"/><g stroke="#404040" stroke-width="2.200"><path d="M6 7.700 H8.500 M11 7.700 H26 M6 15 H8.500 M11 15 H26"/></g></svg>
<div class="t" style="left:742px;top:1563.0px;height:30px;line-height:30px;font-size:22.8px;color:#d6d6d6;">运行日志</div>
<div style="left:859px;top:1559.500px;width:233px;height:32px;border:1.500px solid #5a5a5a;border-radius:2px;background:#404040;margin-top:-0.500px;"></div>
<div style="left:861px;top:1561.500px;width:179px;height:30px;background:#2b2b2b;"></div>
<div style="left:1041px;top:1561px;width:1.5px;height:31px;background:#555;"></div>
<div class="t" style="left:862px;top:1561.0px;height:30px;line-height:30px;font-size:23px;color:#d8d8d8;">全部</div>
<svg style="left:1059px;top:1571px;" width="18" height="12" viewBox="0 0 18 12"><path d="M0.500 0.500 H17.500 L9 11.500 Z" fill="#cfcfcf"/></svg>
<svg style="left:1128px;top:1559px;" width="32" height="36" viewBox="0 0 32 36"><g fill="none" stroke="#2f9fe0" stroke-width="2.200" stroke-linejoin="round" stroke-linecap="round"><path d="M13.500 15 V5 a3.400 3.400 0 0 1 6.800 0 V15"/><path d="M13.500 15 H7.600 a3 3 0 0 0 -3 3 V22.500 H28 V18 a3 3 0 0 0 -3 -3 H20.300"/><path d="M5 22.500 C4.800 27 3.500 30.500 1.800 33.600 H26.500 C28.300 30.500 28.800 26.500 28 22.500"/><path d="M9 33.300 L11 27.500 M15.300 33.300 L16.800 27.500 M21.300 33.300 L22.300 27.500"/></g></svg>
<svg style="left:1193px;top:1565px;" width="30" height="30" viewBox="0 0 30 30"><g fill="none" stroke="#d8d8d8" stroke-width="2" stroke-linecap="round" stroke-linejoin="round"><path d="M14 2.500 H5 a3 3 0 0 0 -3 3 V25 a3 3 0 0 0 3 3 H24.500 a3 3 0 0 0 3 -3 V17"/><circle cx="23.500" cy="6.500" r="4"/><path d="M4.500 25.500 L14.500 15.500 M8.500 14.500 H15.500 V21.500"/></g></svg>
<div class="t" style="left:722.5px;top:1646.0px;height:29px;line-height:29px;font-size:22.3px;color:#a9b7c6;">[2025-12-22 09:22:28] <span style="color:#ffff00;text-decoration:underline;margin-left:1.500px;">&nbsp;#0&nbsp;</span><span class="cj" style="width:21.400px;text-align:right;font-size:21px;">【</span>String<span class="cj" style="width:22px;font-size:21px;">】</span><span class="cj" style="font-size:21px;width:63px;">成功了</span></div>
<div class="t" style="left:722.5px;top:1699.4px;height:29px;line-height:29px;font-size:22.3px;color:#a9b7c6;">[2025-12-22 09:22:28] <span style="color:#ffff00;text-decoration:underline;margin-left:1.500px;">&nbsp;#0&nbsp;</span><span class="cj" style="width:21.400px;text-align:right;font-size:21px;">【</span>String<span class="cj" style="width:22px;font-size:21px;">】</span><span class="cj" style="font-size:21px;width:84px;">开始演示</span> WebView <span class="cj" style="font-size:21px;width:147px;">控件的各种方法</span></div>
<div class="t" style="left:722.5px;top:1752.7px;height:29px;line-height:29px;font-size:22.3px;color:#a9b7c6;">[2025-12-22 09:22:28] <span style="color:#ffff00;text-decoration:underline;margin-left:1.500px;">&nbsp;#0&nbsp;</span><span class="cj" style="width:21.400px;text-align:right;font-size:21px;">【</span>String<span class="cj" style="width:22px;font-size:21px;">】</span>1. WebView <span class="cj" style="font-size:21px;width:252px;">已创建并显示绿色主题界面</span></div>
<div class="t" style="left:722.5px;top:1806.1px;height:29px;line-height:29px;font-size:22.3px;color:#a9b7c6;">[2025-12-22 09:22:28] <span style="color:#ffff00;text-decoration:underline;margin-left:1.500px;">&nbsp;#0&nbsp;</span><span class="cj" style="width:21.400px;text-align:right;font-size:21px;">【</span>String<span class="cj" style="width:22px;font-size:21px;">】</span>2. loadUrl <span class="cj" style="font-size:21px;width:189px;">方法可用于加载网页</span> URL</div>
<div class="t" style="left:722.5px;top:1859.5px;height:29px;line-height:29px;font-size:22.3px;color:#a9b7c6;">[2025-12-22 09:22:28] <span style="color:#ffff00;text-decoration:underline;margin-left:1.500px;">&nbsp;#0&nbsp;</span><span class="cj" style="width:21.400px;text-align:right;font-size:21px;">【</span>String<span class="cj" style="width:22px;font-size:21px;">】</span>3. loadFile <span class="cj" style="font-size:21px;width:231px;">方法可用于加载本地文件</span></div>
<div class="t" style="left:722.5px;top:1912.8px;height:29px;line-height:29px;font-size:22.3px;color:#a9b7c6;">[2025-12-22 09:22:28] <span style="color:#ffff00;text-decoration:underline;margin-left:1.500px;">&nbsp;#0&nbsp;</span><span class="cj" style="width:21.400px;text-align:right;font-size:21px;">【</span>String<span class="cj" style="width:22px;font-size:21px;">】</span>4. dismiss <span class="cj" style="font-size:21px;width:189px;">方法可用于关闭界面</span></div>
<div class="t" style="left:722.5px;top:1966.2px;height:29px;line-height:29px;font-size:22.3px;color:#a9b7c6;">[2025-12-22 09:22:28] <span style="color:#ffff00;text-decoration:underline;margin-left:1.500px;">&nbsp;#0&nbsp;</span><span class="cj" style="width:21.400px;text-align:right;font-size:21px;">【</span>String<span class="cj" style="width:22px;font-size:21px;">】</span>WebView <span class="cj" style="font-size:21px;width:168px;">控件方法演示完成</span></div>
</body></html>
